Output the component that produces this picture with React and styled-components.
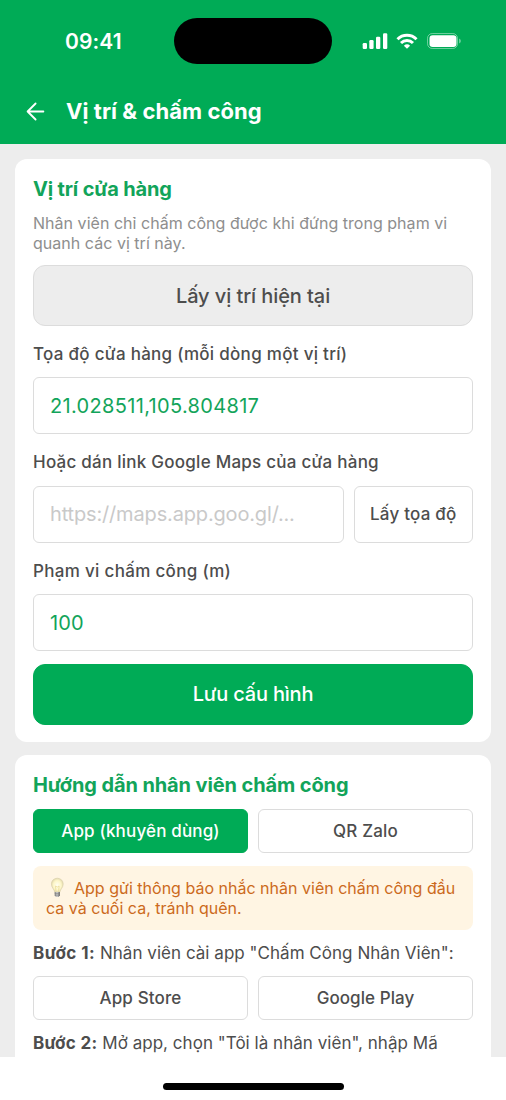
import styled, { createGlobalStyle } from 'styled-components';

const GlobalStyle = createGlobalStyle`
  * {
    box-sizing: border-box;
  }
  body {
    margin: 0;
    background: #fff;
    font-family: Inter, "Noto Sans", sans-serif;
    -webkit-font-smoothing: antialiased;
  }
  button, input {
    font-family: inherit;
    margin: 0;
  }
`;

const Screen = styled.div`
  width: 506px;
  height: 1100px;
  display: flex;
  flex-direction: column;
  overflow: hidden;
  background: #fff;
  color: #4d4d4d;
`;

const Header = styled.header`
  flex: none;
  height: 143.5px;
  background: #00ab56;
  color: #fff;
`;

const StatusBar = styled.div`
  height: 82px;
  display: grid;
  grid-template-columns: 174px 158px 174px;
  align-items: center;
`;

const Clock = styled.div`
  padding: 2px 0 0 65px;
  font-size: 21px;
  font-weight: 600;
  line-height: 26px;
  letter-spacing: 0.1px;
`;

const Island = styled.div`
  height: 46px;
  border-radius: 23px;
  background: #000;
`;

const StatusIcons = styled.svg`
  display: block;
  margin-left: 30px;
`;

const NavRow = styled.div`
  height: 58px;
  display: flex;
  align-items: center;
  padding-left: 26px;
  gap: 21px;
`;

const BackButton = styled.button`
  display: flex;
  padding: 0;
  border: 0;
  background: none;
  color: inherit;
`;

const PageTitle = styled.h1`
  margin: 0;
  font-size: 22px;
  font-weight: 700;
  line-height: 28px;
  letter-spacing: 0.06px;
`;

const Content = styled.main`
  height: 913.5px;
  flex: none;
  overflow: hidden;
  background: #ededed;
  padding: 15.5px 15px 0;
  display: flex;
  flex-direction: column;
  gap: 12.7px;
`;

const Card = styled.section`
  flex: none;
  padding: 19px 18px 17.6px;
  border-radius: 12px;
  background: #fff;
`;

const CardTitle = styled.h2`
  margin: 0 0 ${p => p.$gap}px;
  color: #12a45a;
  font-size: 20px;
  font-weight: 700;
  line-height: 23px;
  letter-spacing: ${p => p.$spacing}px;
`;

const Description = styled.p`
  margin: 0 0 12px;
  color: #8e8e8e;
  font-size: 16px;
  line-height: 19.5px;
  letter-spacing: ${p => p.$spacing || 0.03}px;
  white-space: nowrap;
`;

const LargeButton = styled.button`
  display: block;
  width: 100%;
  height: 60.6px;
  padding: 0;
  padding-top: ${p => (p.$primary ? 0 : 1)}px;
  border: 1px solid ${p => (p.$primary ? '#00ab56' : '#dcdcdc')};
  border-radius: 12px;
  background: ${p => (p.$primary ? '#00ab56' : '#ededed')};
  color: ${p => (p.$primary ? '#fff' : '#4d4d4d')};
  font-size: 20px;
  font-weight: 500;
  letter-spacing: ${p => (p.$primary ? -0.2 : -0.08)}px;
`;

const Label = styled.label`
  display: block;
  margin: 18.2px 0 13.4px;
  font-size: 17px;
  font-weight: 500;
  line-height: 20px;
  letter-spacing: ${p => p.$spacing}px;
`;

const Input = styled.input`
  display: block;
  flex: 1;
  width: 100%;
  min-width: 0;
  height: 57px;
  padding: 0 16px;
  border: 1px solid #dcdcdc;
  border-radius: 6px;
  outline: 0;
  background: #fff;
  color: #12a45a;
  font-size: 20px;
  letter-spacing: ${p => p.$spacing}px;

  &::placeholder {
    color: #c9c9c9;
    opacity: 1;
  }
`;

const ButtonRow = styled.div`
  display: flex;
  gap: 10px;
`;

const SmallButton = styled.button`
  flex: ${p => (p.$width ? 'none' : 1)};
  width: ${p => (p.$width ? p.$width + 'px' : 'auto')};
  height: ${p => p.$height || 44}px;
  padding: 0;
  border: 1px solid ${p => (p.$active ? '#00ab56' : '#dcdcdc')};
  border-radius: 6px;
  background: ${p => (p.$active ? '#00ab56' : '#fff')};
  color: ${p => (p.$active ? '#fff' : '#4d4d4d')};
  font-size: 17px;
  font-weight: 500;
  letter-spacing: ${p => p.$spacing || 0.15}px;
`;

const SaveArea = styled.div`
  margin-top: 12.7px;
`;

const Note = styled.div`
  margin: 13px 0 12.4px;
  padding: 12.6px 13px 12px;
  border-radius: 8px;
  background: #fff5e3;
  color: #cc6a1c;
  font-size: 16px;
  line-height: 19.5px;
  letter-spacing: 0.01px;
  white-space: nowrap;
`;

const Bulb = styled.svg`
  display: inline-block;
  width: 22px;
  height: 19px;
  margin-right: 6px;
  vertical-align: -3px;
  overflow: visible;
`;

const Step = styled.p`
  margin: 12.9px 0 12.4px;
  font-size: 17px;
  line-height: 20px;
  letter-spacing: 0.03px;
  white-space: nowrap;

  b {
    font-weight: 700;
    letter-spacing: ${p => p.$bold}px;
  }
`;

const HomeArea = styled.footer`
  flex: 1;
  display: flex;
  justify-content: center;
  padding-top: 26px;
`;

const HomeIndicator = styled.div`
  width: 181px;
  height: 6.6px;
  border-radius: 4px;
  background: #000;
`;

function PhoneStatus() {
  return (
    <StatusIcons width="102" height="18" viewBox="0 0 102 18" fill="#fff">
      <rect x="0.7" y="11" width="4.3" height="6" rx="1.2" />
      <rect x="7.3" y="8" width="4.3" height="9" rx="1.2" />
      <rect x="14" y="4.8" width="4.3" height="12.2" rx="1.2" />
      <rect x="21" y="1.2" width="4.3" height="15.8" rx="1.2" />
      <g fill="none" stroke="#fff" strokeWidth="3">
        <path d="M35.5 7.2a13.6 13.6 0 0 1 19 0" />
        <path d="M39 11a8.7 8.7 0 0 1 12 0" />
      </g>
      <path d="M45 16.8l-3.1-3.1a4.5 4.5 0 0 1 6.2 0z" />
      <rect x="65.5" y="1.5" width="30" height="15" rx="4.8" fill="none" stroke="#fff" strokeOpacity="0.42" />
      <rect x="67.5" y="3.3" width="27" height="11.6" rx="3.2" />
      <path d="M97.2 6.6a2.6 2.6 0 0 1 0 4.8z" fillOpacity="0.5" />
    </StatusIcons>
  );
}

function BulbIcon() {
  return (
    <Bulb viewBox="0 0 22 19">
      <defs>
        <radialGradient id="glass" cx="0.5" cy="0.5" r="0.55">
          <stop offset="0" stopColor="#fffef2" />
          <stop offset="0.6" stopColor="#fdf6c8" />
          <stop offset="1" stopColor="#ddd3a8" />
        </radialGradient>
        <linearGradient id="base" x1="0" x2="1">
          <stop offset="0" stopColor="#777" />
          <stop offset="0.45" stopColor="#d6d6d6" />
          <stop offset="1" stopColor="#666" />
        </linearGradient>
      </defs>
      <path d="M11.3 0.2c-3.4 0-5.9 2.5-5.9 5.7 0 3.7 2.8 5.1 3.3 8.3h5.2c.5-3.2 3.3-4.6 3.3-8.3 0-3.2-2.5-5.7-5.9-5.7z" fill="url(#glass)" stroke="#d8cfa9" strokeWidth="0.6" />
      <path d="M10 13.5L9.5 8l1.8 1 1.8-1-.5 5.5" fill="none" stroke="#e6d487" strokeWidth="0.6" />
      <path d="M8.7 14h5.2v3.2l-1.3 1.8h-2.6l-1.3-1.8z" fill="url(#base)" />
      <path d="M8.7 15.6h5.2M9 17.2h4.6" stroke="#777" strokeWidth="0.5" />
    </Bulb>
  );
}

export default function App() {
  return (
    <Screen>
      <GlobalStyle />
      <Header>
        <StatusBar>
          <Clock>09:41</Clock>
          <Island />
          <PhoneStatus />
        </StatusBar>
        <NavRow>
          <BackButton aria-label="Quay lại">
            <svg width="19" height="19" viewBox="0 0 19 19" fill="none" stroke="currentColor" strokeWidth="1.8" strokeLinecap="round" strokeLinejoin="round">
              <path d="M17.4 9.5H1.6M9.6 1.5l-8 8 8 8" />
            </svg>
          </BackButton>
          <PageTitle>Vị trí &amp; chấm công</PageTitle>
        </NavRow>
      </Header>

      <Content>
        <Card>
          <CardTitle $gap={13} $spacing={-0.17}>Vị trí cửa hàng</CardTitle>
          <Description>
            Nhân viên chỉ chấm công được khi đứng trong phạm vi<br />
            quanh các vị trí này.
          </Description>
          <LargeButton>Lấy vị trí hiện tại</LargeButton>

          <Label $spacing={0.29}>Tọa độ cửa hàng (mỗi dòng một vị trí)</Label>
          <Input defaultValue="21.028511,105.804817" $spacing={0.33} />

          <Label $spacing={0.25}>Hoặc dán link Google Maps của cửa hàng</Label>
          <ButtonRow>
            <Input placeholder="https://maps.app.goo.gl/..." $spacing={-0.16} />
            <SmallButton $width={119.5} $height={57} $spacing={0.21}>Lấy tọa độ</SmallButton>
          </ButtonRow>

          <Label $spacing={0.32}>Phạm vi chấm công (m)</Label>
          <Input defaultValue="100" $spacing={0.12} />

          <SaveArea>
            <LargeButton $primary>Lưu cấu hình</LargeButton>
          </SaveArea>
        </Card>

        <Card>
          <CardTitle $gap={12} $spacing={-0.11}>Hướng dẫn nhân viên chấm công</CardTitle>
          <ButtonRow>
            <SmallButton $active $spacing={0.16}>App (khuyên dùng)</SmallButton>
            <SmallButton $spacing={0.17}>QR Zalo</SmallButton>
          </ButtonRow>
          <Note>
            <BulbIcon />App gửi thông báo nhắc nhân viên chấm công đầu<br />
            ca và cuối ca, tránh quên.
          </Note>
          <Step $bold={0.45}><b>Bước 1:</b> Nhân viên cài app "Chấm Công Nhân Viên":</Step>
          <ButtonRow>
            <SmallButton $spacing={0.13}>App Store</SmallButton>
            <SmallButton $spacing={0.06}>Google Play</SmallButton>
          </ButtonRow>
          <Step $bold={0.3}><b>Bước 2:</b> Mở app, chọn "Tôi là nhân viên", nhập Mã</Step>
        </Card>
      </Content>

      <HomeArea>
        <HomeIndicator />
      </HomeArea>
    </Screen>
  );
}
